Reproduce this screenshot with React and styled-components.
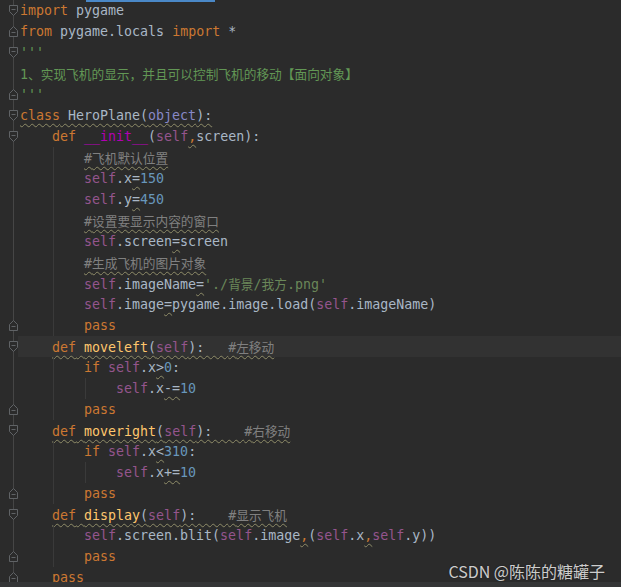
import styled, { createGlobalStyle, css } from 'styled-components'

const GlobalStyle = createGlobalStyle`
  html, body {
    margin: 0;
    padding: 0;
    background: #2b2b2b;
    overflow: hidden;
  }
`

const colors = {
  tx: '#a9b7c6',
  kw: '#cc7832',
  self: '#94558d',
  num: '#6897bb',
  str: '#6a8759',
  doc: '#629755',
  cm: '#808080',
  fn: '#ffc66d',
  magic: '#b200b2',
  bi: '#8888c6',
}

const warnStyle = css`
  text-decoration-line: underline;
  text-decoration-style: wavy;
  text-decoration-color: #8f8c68;
  text-decoration-thickness: 1px;
  text-underline-offset: 3px;
`

const Window = styled.div`
  position: relative;
  display: flex;
  flex-direction: column;
  height: 100vh;
  background: #2b2b2b;
  font-family: "DejaVu Sans Mono", "Liberation Mono", "Noto Sans CJK SC", monospace;
  font-size: 13.3px;
`

const TabMark = styled.div`
  position: absolute;
  top: 0;
  left: 86px;
  width: 129px;
  height: 2px;
  background: #4a88c7;
`

const Editor = styled.div`
  flex: 1;
  overflow: hidden;
`

const Line = styled.div`
  display: flex;
  height: 21px;
  line-height: 22px;
`

const GutterCell = styled.div`
  position: relative;
  flex: 0 0 18px;
  background: linear-gradient(to right, transparent 13px, #464646 13px, #464646 14px, transparent 14px);

  svg {
    position: absolute;
    left: 9px;
    top: 5px;
  }
`

const guideAt = (x) =>
  `linear-gradient(to right, transparent ${x}px, #3a3a3a ${x}px, #3a3a3a ${x + 1}px, transparent ${x + 1}px)`

const Code = styled.div`
  flex: 1;
  white-space: pre;
  padding-left: ${(p) => 2 + p.$indent * 32}px;
  color: ${colors.tx};
  background-color: ${(p) => (p.$current ? '#323232' : 'transparent')};
  background-image: ${(p) =>
    [p.$indent >= 2 && guideAt(35), p.$indent >= 3 && guideAt(67)].filter(Boolean).join(', ') || 'none'};
`

const Token = styled.span`
  color: ${(p) => colors[p.$kind]};
  ${(p) => p.$warn && warnStyle}
`

const Han = styled.span`
  font-family: "Noto Sans CJK SC", sans-serif;
  font-size: 12.7px;
`

const Warn = styled.span`
  ${warnStyle}
`

const ScrollTrack = styled.div`
  flex: 0 0 5px;
  background: #343536;
`

const Watermark = styled.div`
  position: absolute;
  right: 16px;
  bottom: 5px;
  font-family: "Noto Sans CJK SC", "Noto Sans", sans-serif;
  font-size: 16px;
  line-height: 22px;
  color: rgba(230, 230, 230, 0.88);
  text-shadow: 0 0 2px rgba(0, 0, 0, 0.4);
`

const FoldMark = ({ end }) => (
  <svg width="9" height="11" viewBox="0 0 9 11">
    <path
      d={end ? 'M0.5 10.5H8.5V4.5L4.5 0.5L0.5 4.5Z' : 'M0.5 0.5H8.5V6.5L4.5 10.5L0.5 6.5Z'}
      fill="#2b2b2b"
      stroke="#606366"
    />
    <path d={end ? 'M2.5 6.5H6.5' : 'M2.5 4.5H6.5'} stroke="#606366" />
  </svg>
)

// split out chinese characters so they get the narrower ide glyph size
const withHan = (text) =>
  text.split(/([\u3000-\u303f\u4e00-\u9fff\uff00-\uffef]+)/).map((part, i) =>
    /[\u3000-\u303f\u4e00-\u9fff\uff00-\uffef]/.test(part) ? <Han key={i}>{part}</Han> : part
  )

const lines = [
  { fold: 'start', t: [['kw', 'import'], ['tx', ' pygame']] },
  { fold: 'end', t: [['kw', 'from'], ['tx', ' pygame.locals '], ['kw', 'import'], ['tx', ' *']] },
  { fold: 'start', t: [['doc', "'''"]] },
  { t: [['doc', '1、实现飞机的显示，并且可以控制飞机的移动【面向对象】']] },
  { fold: 'end', t: [['doc', "'''"]] },
  { fold: 'start', warn: true, t: [['kw', 'class'], ['tx', ' HeroPlane('], ['bi', 'object'], ['tx', '):']] },
  { i: 1, fold: 'start', t: [['kw', 'def'], ['tx', ' '], ['magic', '__init__'], ['tx', '('], ['self', 'self'], ['kw', ',', 1], ['tx', 'screen):']] },
  { i: 2, t: [['cm', '#飞机默认位置', 1]] },
  { i: 2, t: [['self', 'self'], ['tx', '.x'], ['tx', '=', 1], ['num', '150']] },
  { i: 2, t: [['self', 'self'], ['tx', '.y'], ['tx', '=', 1], ['num', '450']] },
  { i: 2, t: [['cm', '#设置要显示内容的窗口', 1]] },
  { i: 2, t: [['self', 'self'], ['tx', '.screen'], ['tx', '=', 1], ['tx', 'screen']] },
  { i: 2, t: [['cm', '#生成飞机的图片对象', 1]] },
  { i: 2, t: [['self', 'self'], ['tx', '.imageName'], ['tx', '=', 1], ['str', "'./背景/我方.png'"]] },
  { i: 2, t: [['self', 'self'], ['tx', '.image'], ['tx', '=', 1], ['tx', 'pygame.image.load('], ['self', 'self'], ['tx', '.imageName)']] },
  { i: 2, fold: 'end', t: [['kw', 'pass']] },
  { i: 1, fold: 'start', warn: true, current: true, t: [['kw', 'def'], ['tx', ' '], ['fn', 'moveleft'], ['tx', '('], ['self', 'self'], ['tx', '):   '], ['cm', '#左移动']] },
  { i: 2, t: [['kw', 'if'], ['tx', ' '], ['self', 'self'], ['tx', '.x'], ['tx', '>', 1], ['num', '0'], ['tx', ':']] },
  { i: 3, t: [['self', 'self'], ['tx', '.x'], ['tx', '-=', 1], ['num', '10']] },
  { i: 2, fold: 'end', t: [['kw', 'pass']] },
  { i: 1, fold: 'start', warn: true, t: [['kw', 'def'], ['tx', ' '], ['fn', 'moveright'], ['tx', '('], ['self', 'self'], ['tx', '):    '], ['cm', '#右移动']] },
  { i: 2, t: [['kw', 'if'], ['tx', ' '], ['self', 'self'], ['tx', '.x'], ['tx', '<', 1], ['num', '310'], ['tx', ':']] },
  { i: 3, t: [['self', 'self'], ['tx', '.x'], ['tx', '+=', 1], ['num', '10']] },
  { i: 2, fold: 'end', t: [['kw', 'pass']] },
  { i: 1, fold: 'start', warn: true, t: [['kw', 'def'], ['tx', ' '], ['fn', 'display'], ['tx', '('], ['self', 'self'], ['tx', '):    '], ['cm', '#显示飞机']] },
  { i: 2, t: [['self', 'self'], ['tx', '.screen.blit('], ['self', 'self'], ['tx', '.image'], ['kw', ',', 1], ['tx', '('], ['self', 'self'], ['tx', '.x'], ['kw', ',', 1], ['self', 'self'], ['tx', '.y))']] },
  { i: 2, fold: 'end', t: [['kw', 'pass']] },
  { i: 1, fold: 'end', t: [['kw', 'pass']] },
]

const CodeLine = ({ line }) => {
  const tokens = line.t.map(([kind, text, warn], k) => (
    <Token key={k} $kind={kind} $warn={!!warn}>
      {withHan(text)}
    </Token>
  ))
  return (
    <Line>
      <GutterCell>{line.fold && <FoldMark end={line.fold === 'end'} />}</GutterCell>
      <Code $indent={line.i || 0} $current={line.current}>
        {line.warn ? <Warn>{tokens}</Warn> : tokens}
      </Code>
    </Line>
  )
}

export default function App() {
  return (
    <>
      <GlobalStyle />
      <Window>
        <TabMark />
        <Editor>
          {lines.map((line, n) => (
            <CodeLine key={n} line={line} />
          ))}
        </Editor>
        <ScrollTrack />
        <Watermark>CSDN @陈陈的糖罐子</Watermark>
      </Window>
    </>
  )
}
